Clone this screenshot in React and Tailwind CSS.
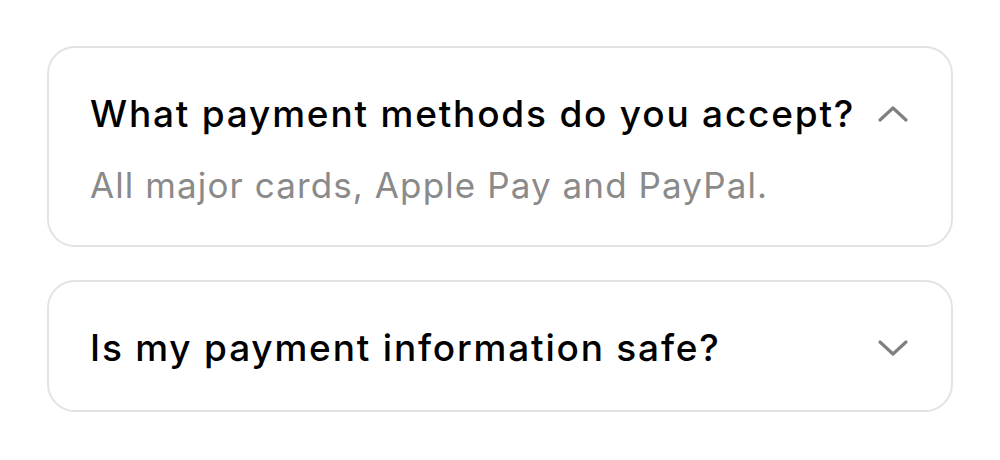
import React, { useState } from 'react';

const faqs = [
  { q: 'What payment methods do you accept?', a: 'All major cards, Apple Pay and PayPal.' },
  { q: 'Is my payment information safe?', a: 'Yes, every payment is encrypted end to end.' },
];

const Chevron = ({ open }) => (
  <svg width="32" height="20" viewBox="0 0 32 20" fill="none" className="shrink-0">
    <path
      d={open ? 'M3 16 L16 4 L29 16' : 'M3 4 L16 16 L29 4'}
      stroke="#808080"
      strokeWidth="3.2"
      strokeLinecap="round"
      strokeLinejoin="round"
    />
  </svg>
);

export default function App() {
  const [open, setOpen] = useState(0);

  return (
    <div
      className="w-[1000px] h-[460px] bg-white pt-[46px] px-[47px] flex flex-col gap-[33px]"
      style={{ fontFamily: 'Inter, "Noto Sans", sans-serif' }}
    >
      {faqs.map((item, i) => {
        const isOpen = open === i;
        return (
          <div
            key={item.q}
            className="border-2 border-[#e3e3e3] rounded-[28px] pl-[41px] pr-[42px] pt-[42px] pb-[38px]"
          >
            <button
              onClick={() => setOpen(isOpen ? -1 : i)}
              className="w-full flex items-center justify-between h-[48px] text-left"
            >
              <span className="text-[37px] font-medium text-black tracking-[1.8px]">{item.q}</span>
              <Chevron open={isOpen} />
            </button>
            {isOpen && (
              <p className="mt-[25px] h-[44px] leading-[44px] text-[35px] text-[#8a8a8a] tracking-[1.1px]">
                {item.a}
              </p>
            )}
          </div>
        );
      })}
    </div>
  );
}
